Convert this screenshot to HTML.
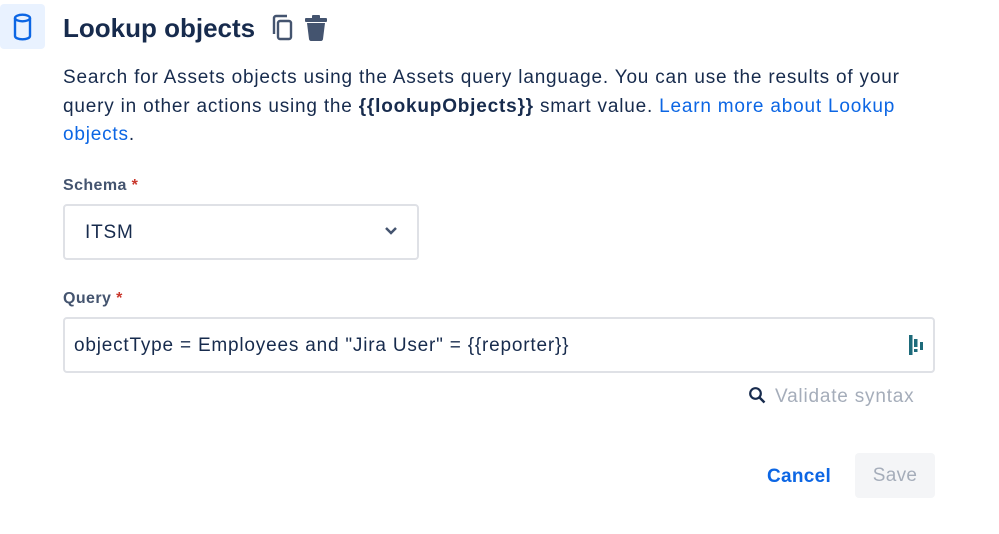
<html><head><style>
body{margin:0;background:#fff;font-family:"Liberation Sans",sans-serif;color:#172b4d;width:999px;height:534px;overflow:hidden;position:relative;letter-spacing:0.8px}
.a{position:absolute}
p{margin:0}
.lbl{font-size:16px;font-weight:bold;color:#44546f;letter-spacing:0.4px}
.lbl span{color:#c9372c}
.box{border:2px solid #dfe1e6;border-radius:4px;box-sizing:border-box;background:#fff}
</style></head><body>
<div class="a" style="left:0;top:4px;width:45px;height:45px;background:#e9f2ff;border-radius:4px"></div>
<svg class="a" style="left:12px;top:13px" width="21" height="28" viewBox="0 0 21 28"><ellipse cx="10.5" cy="5" rx="7.5" ry="3.3" fill="none" stroke="#0c66e4" stroke-width="2.4"/><path d="M3 5v18c0 2 3.5 3.3 7.5 3.3s7.5-1.3 7.5-3.3V5" fill="none" stroke="#0c66e4" stroke-width="2.4"/></svg>
<div class="a" style="left:63px;top:13px;font-size:26px;font-weight:bold;letter-spacing:0px;color:#172b4d">Lookup objects</div>
<svg class="a" style="left:271px;top:14px" width="24" height="28" viewBox="0 0 24 28"><rect x="7" y="7" width="13" height="18" rx="2" fill="none" stroke="#44546f" stroke-width="2.4"/><path d="M3 20V4c0-1 1-2 2-2h11" fill="none" stroke="#44546f" stroke-width="2.4"/></svg>
<svg class="a" style="left:304px;top:14px" width="24" height="28" viewBox="0 0 24 28"><rect x="1" y="4" width="22" height="4" rx="1" fill="#44546f"/><rect x="8" y="1" width="8" height="4" rx="1" fill="#44546f"/><path d="M3 9h18l-2 16c0 1-1 2-2 2H7c-1 0-2-1-2-2z" fill="#44546f"/></svg>
<p class="a" style="left:63px;top:64px;width:845px;font-size:19px;line-height:28.5px">Search for Assets objects using the Assets query language. You can use the results of your query in other actions using the <b>{{lookupObjects}}</b> smart value. <span style="color:#0c66e4">Learn more about Lookup objects</span>.</p>
<div class="a lbl" style="left:63px;top:177px">Schema <span>*</span></div>
<div class="a box" style="left:63px;top:204px;width:356px;height:56px"></div>
<div class="a" style="left:85px;top:222px;font-size:19px">ITSM</div>
<svg class="a" style="left:384px;top:226px" width="14" height="10" viewBox="0 0 14 10"><path d="M2 2l5 5 5-5" fill="none" stroke="#44546f" stroke-width="2.5"/></svg>
<div class="a lbl" style="left:63px;top:290px">Query <span>*</span></div>
<div class="a box" style="left:63px;top:317px;width:872px;height:56px"></div>
<div class="a" style="left:74px;top:335px;font-size:19px">objectType = Employees and "Jira User" = {{reporter}}</div>
<svg class="a" style="left:907px;top:334px" width="18" height="22" viewBox="0 0 18 22"><rect x="2" y="1" width="3.5" height="20" fill="#1d6a7a"/><rect x="7" y="5" width="3.5" height="8" fill="#1d6a7a"/><rect x="7" y="15" width="3.5" height="3" fill="#1d6a7a"/><rect x="13" y="8" width="3" height="8" fill="#1d6a7a"/></svg>
<svg class="a" style="left:748px;top:386px" width="18" height="18" viewBox="0 0 18 18"><circle cx="7.5" cy="7.5" r="5.3" fill="none" stroke="#172b4d" stroke-width="2.2"/><path d="M11.5 11.5l5 5" stroke="#172b4d" stroke-width="2.4"/></svg>
<div class="a" style="left:775px;top:386px;font-size:19px;color:#a5adba">Validate syntax</div>
<div class="a" style="left:767px;top:466px;font-size:19px;font-weight:bold;letter-spacing:0.3px;color:#0c66e4">Cancel</div>
<div class="a" style="left:855px;top:453px;width:80px;height:45px;background:#f4f5f7;border-radius:4px;color:#a5adba;font-size:19px;text-align:center;line-height:45px;letter-spacing:0.3px">Save</div>
</body></html>
